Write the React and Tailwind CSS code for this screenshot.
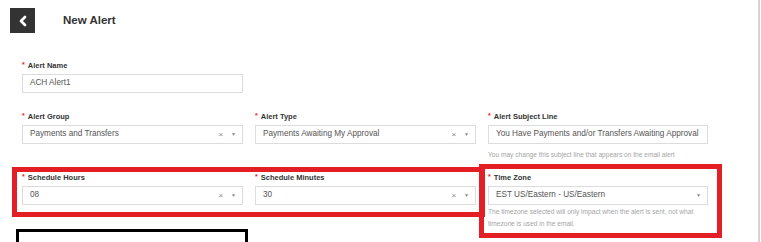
import { ChevronLeft } from "lucide-react";

const font = { fontFamily: '"Liberation Sans", Arial, sans-serif' };

const Label = ({ children }) => (
  <div className="flex items-center h-[10px] text-[7.5px] font-bold text-[#333] whitespace-nowrap">
    <span className="text-[#e31e24] mr-[3px] text-[7px] -mt-[2px]">*</span>
    {children}
  </div>
);

const Input = ({ value }) => (
  <div className="mt-[3px] h-[19px] border border-[#dcdcdc] flex items-center px-[7px] text-[8.2px] text-[#555] whitespace-nowrap overflow-hidden">
    {value}
  </div>
);

const Select = ({ value, clearable = true }) => (
  <div className="mt-[3px] h-[19px] border border-[#dcdcdc] flex items-center pl-[7px] pr-[6px] text-[8.2px] text-[#555] whitespace-nowrap">
    <span>{value}</span>
    <span className="ml-auto flex items-center gap-[8px] text-[#888]">
      {clearable && <span className="text-[8px] leading-none">×</span>}
      <span className="text-[5px] leading-none">▼</span>
    </span>
  </div>
);

const Hint = ({ children, className = "" }) => (
  <div className={`text-[6.6px] leading-[12px] text-[#a5a5a5] ${className}`}>{children}</div>
);

export default function App() {
  return (
    <div
      className="relative w-[760px] h-[242px] overflow-hidden bg-white border-r-2 border-[#d4d4d4]"
      style={font}
    >
      {/* header */}
      <div className="flex items-center pt-[8px] pl-[10px]">
        <button className="w-[25px] h-[25px] bg-[#333] flex items-center justify-center">
          <ChevronLeft className="w-[16px] h-[16px] text-white" strokeWidth={4} />
        </button>
        <h1 className="ml-[28px] text-[11.5px] font-bold text-[#333]">New Alert</h1>
      </div>

      <div className="pl-[22px] pr-[51px]">
        <div className="mt-[28px] w-[221px]">
          <Label>Alert Name</Label>
          <Input value="ACH Alert1" />
        </div>

        <div className="mt-[19px] grid grid-cols-[221px_221px_220px] gap-x-[12px]">
          <div>
            <Label>Alert Group</Label>
            <Select value="Payments and Transfers" />
          </div>
          <div>
            <Label>Alert Type</Label>
            <Select value="Payments Awaiting My Approval" />
          </div>
          <div>
            <Label>Alert Subject Line</Label>
            <Input value="You Have Payments and/or Transfers Awaiting Approval" />
            <Hint className="mt-[5px] whitespace-nowrap">
              You may change this subject line that appears on the email alert
            </Hint>
          </div>
        </div>

        <div className="mt-[12px] grid grid-cols-[221px_221px_220px] gap-x-[12px]">
          <div>
            <Label>Schedule Hours</Label>
            <Select value="08" />
          </div>
          <div>
            <Label>Schedule Minutes</Label>
            <Select value="30" />
          </div>
          <div>
            <Label>Time Zone</Label>
            <Select value="EST US/Eastern - US/Eastern" clearable={false} />
            <Hint className="mt-[1px] pr-[6px]">
              The timezone selected will only impact when the alert is sent, not what
              timezone is used in the email.
            </Hint>
          </div>
        </div>
      </div>

      {/* preview card, cut off */}
      <div className="ml-[16px] -mt-[1px] w-[232px] h-[40px] border-[3px] border-black px-[8px] pt-[7px]">
        <div className="text-[8px] font-bold text-[#d0d0d0]">Subject Preview</div>
      </div>

      {/* annotation overlays */}
      <div className="absolute left-[12px] top-[167px] w-[473px] h-[50px] border-[5px] border-[#e31e24]" />
      <div className="absolute left-[479px] top-[164px] w-[243px] h-[74px] border-[5px] border-[#e31e24]" />
    </div>
  );
}
